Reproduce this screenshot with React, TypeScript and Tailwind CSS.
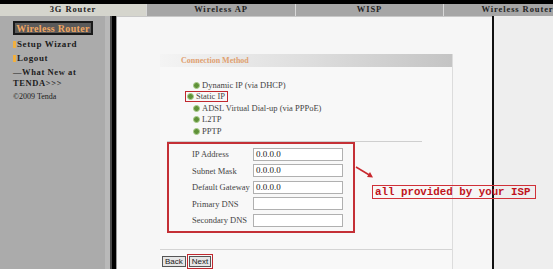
import React from 'react';

const serif = { fontFamily: '"Liberation Serif", "Times New Roman", serif' };

const tabs = [
  { label: '3G Router', w: 'w-[147px]', active: true },
  { label: 'Wireless AP', w: 'w-[149px]', active: false },
  { label: 'WISP', w: 'w-[148px]', active: false },
  { label: 'Wireless Router', w: 'w-[148px]', active: false },
];

const methods = [
  { label: 'Dynamic IP (via DHCP)', mark: false },
  { label: 'Static IP', mark: true },
  { label: 'ADSL Virtual Dial-up (via PPPoE)', mark: false },
  { label: 'L2TP', mark: false },
  { label: 'PPTP', mark: false },
];

const fields = [
  { label: 'IP Address', value: '0.0.0.0' },
  { label: 'Subnet Mask', value: '0.0.0.0' },
  { label: 'Default Gateway', value: '0.0.0.0' },
  { label: 'Primary DNS', value: '' },
  { label: 'Secondary DNS', value: '' },
];

function Radio() {
  return (
    <span className="inline-block w-[7px] h-[7px] rounded-full bg-[#5f9138] border border-[#a9cc8a] shrink-0" />
  );
}

export default function App() {
  return (
    <div className="w-[553px] h-[269px] overflow-hidden bg-[#f6f6f6] flex flex-col" style={serif}>
      <div className="h-[4px] bg-black" />
      <div className="h-[12px] flex text-[8.5px] font-bold tracking-[0.9px] text-[#222] bg-black overflow-hidden">
        {tabs.map((t) => (
          <div
            key={t.label}
            className={`${t.w} shrink-0 flex items-center justify-center border-r border-[#d8d8d8] ${
              t.active ? 'bg-[#d5d5cd]' : 'bg-[#a6a6a6]'
            }`}
          >
            {t.label}
          </div>
        ))}
      </div>
      <div className="h-[1px] bg-[#c8c8c8]" />

      <div className="flex-1 flex">
        {/* sidebar */}
        <div className="w-[105px] bg-[#ababab] pt-[5px] pl-[13px]">
          <div className="w-[80px] h-[14px] bg-[#5a5a5a] border-2 border-[#1a1a1a] flex items-center justify-center text-[10px] font-bold text-[#f1a660] tracking-[0.3px]">
            Wireless Router
          </div>
          <div className="mt-[2px] flex items-center h-[14px] text-[9px] font-bold text-[#1c1c1c] tracking-[0.6px]">
            <span className="w-[3px] h-[7px] bg-[#f0b040] mr-[1px]" />
            Setup Wizard
          </div>
          <div className="flex items-center h-[14px] text-[9px] font-bold text-[#1c1c1c] tracking-[0.6px]">
            <span className="w-[3px] h-[7px] bg-[#f0b040] mr-[1px]" />
            Logout
          </div>
          <div className="mt-[2px] text-[8.5px] font-bold text-[#1c1c1c] leading-[11px] tracking-[0.6px]">
            —What New at
            <br />
            TENDA&gt;&gt;&gt;
          </div>
          <div className="mt-[2px] text-[8px] text-[#1c1c1c] leading-[11px]">©2009 Tenda</div>
        </div>
        <div className="w-[5px] bg-[#b9b9b9]" />
        <div className="w-[2px] bg-[#4a4a4a]" />
        <div className="w-[4px] bg-black" />
        <div className="w-[1px] bg-[#9a9a9a]" />

        {/* content */}
        <div className="w-[375px] relative pl-[43px] pt-[38px]">
          <div className="w-[293px] h-full flex flex-col border-r border-[#dcdcdc] bg-[#f8f8f8]">
            <div className="h-[13px] bg-gradient-to-r from-[#f4f4f4] via-[#dedede] to-[#c4c4c4] flex items-center pl-[21px] text-[8px] font-bold text-[#e0a070]">
              Connection Method
            </div>
            <div className="pl-[33px] pt-[12px] flex flex-col text-[8.5px] text-[#444]">
              {methods.map((m) =>
                m.mark ? (
                  <div
                    key={m.label}
                    className="h-[11.5px] -ml-[8px] w-[43px] border-[1.5px] border-[#c0282e] flex items-center gap-[2px] pl-[1px]"
                  >
                    <Radio />
                    {m.label}
                  </div>
                ) : (
                  <div key={m.label} className="h-[11.5px] flex items-center gap-[2px]">
                    <Radio />
                    {m.label}
                  </div>
                )
              )}
            </div>
            <div className="ml-[7px] mt-[4px] w-[255px] h-[1px] bg-[#cfcfcf]" />
            <div className="ml-[7px] w-[188px] h-[91px] border-2 border-[#c43036] pt-[4px] pl-[23px] flex flex-col gap-[3.5px]">
              {fields.map((f) => (
                <div key={f.label} className="flex items-center h-[13px] text-[8.5px] text-[#444]">
                  <span className="w-[61px]">{f.label}</span>
                  <span className="w-[90px] h-[13px] bg-white border border-[#b0b0b0] pl-[2px] text-[9px] leading-[11px] text-[#222]">
                    {f.value}
                  </span>
                </div>
              ))}
            </div>
            <div className="mt-[16px] h-[1px] bg-[#d4d4d4]" />
            <div className="pt-[4px] pl-[2px] flex items-center gap-[1px]" style={{ fontFamily: '"Liberation Sans", Arial, sans-serif' }}>
              <span className="h-[11px] px-[2px] bg-[#e6e6e6] border border-[#555] text-[8px] leading-[9px] text-[#222]">Back</span>
              <span className="h-[15px] px-[1px] border-[1.5px] border-[#c0282e] flex items-center">
                <span className="h-[11px] px-[2px] bg-[#e6e6e6] border border-[#555] text-[8px] leading-[9px] text-[#222]">Next</span>
              </span>
            </div>
          </div>

          {/* annotation */}
          <svg className="absolute left-[238px] top-[150px]" width="20" height="14" viewBox="0 0 20 14">
            <line x1="1" y1="1" x2="16" y2="10" stroke="#c8282e" strokeWidth="1.5" />
            <path d="M12 11 L18 11.5 L15 6 Z" fill="#c8282e" />
          </svg>
          <div
            className="absolute left-[255px] top-[169px] w-[164px] h-[14px] border border-[#d03038] flex items-center pl-[2px] text-[10.8px] font-bold text-[#c0141c] leading-none whitespace-nowrap"
            style={{ fontFamily: '"Liberation Mono", "Courier New", monospace' }}
          >
            all provided by your ISP
          </div>
        </div>
        <div className="w-[2px] bg-[#111]" />
        <div className="flex-1 bg-[#eeeeee]" />
      </div>
    </div>
  );
}
